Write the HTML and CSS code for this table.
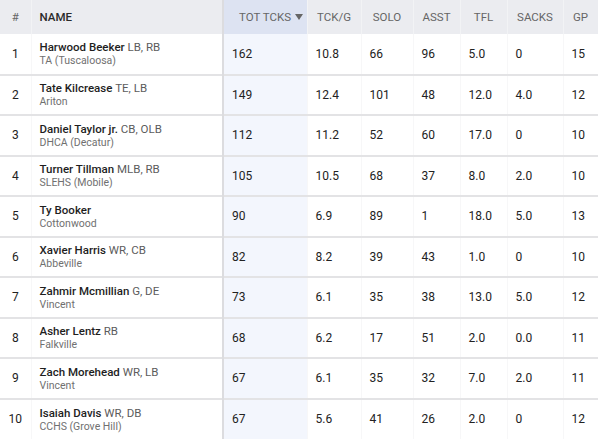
FILE: index.html
```html
<!DOCTYPE html>
<html lang="en">
<head>
    <meta charset="UTF-8">
    <meta name="viewport" content="width=device-width, initial-scale=1.0">
    <title>Tackle Leaders</title>
    <link rel="stylesheet" href="styles.css">
</head>
<body>
    <table class="stats-table">
        <colgroup>
            <col class="col-rank">
            <col class="col-name">
            <col class="col-tot">
            <col class="col-tckg">
            <col class="col-solo">
            <col class="col-asst">
            <col class="col-tfl">
            <col class="col-sacks">
            <col class="col-gp">
        </colgroup>
        <thead>
            <tr>
                <th class="rank">#</th>
                <th class="name-head">NAME</th>
                <th class="sorted">TOT TCKS
                    <svg class="sort-arrow" width="8" height="6" viewBox="0 0 8 6"><path d="M0 0h8L4 6z" fill="#666"/></svg>
                </th>
                <th>TCK/G</th>
                <th>SOLO</th>
                <th>ASST</th>
                <th>TFL</th>
                <th>SACKS</th>
                <th>GP</th>
            </tr>
        </thead>
        <tbody>
            <tr>
                <td class="rank">1</td>
                <td class="player"><div class="player-name">Harwood Beeker <span class="pos">LB, RB</span></div><div class="school">TA (Tuscaloosa)</div></td>
                <td class="sorted">162</td><td>10.8</td><td>66</td><td>96</td><td>5.0</td><td>0</td><td>15</td>
            </tr>
            <tr>
                <td class="rank">2</td>
                <td class="player"><div class="player-name">Tate Kilcrease <span class="pos">TE, LB</span></div><div class="school">Ariton</div></td>
                <td class="sorted">149</td><td>12.4</td><td>101</td><td>48</td><td>12.0</td><td>4.0</td><td>12</td>
            </tr>
            <tr>
                <td class="rank">3</td>
                <td class="player"><div class="player-name">Daniel Taylor jr. <span class="pos">CB, OLB</span></div><div class="school">DHCA (Decatur)</div></td>
                <td class="sorted">112</td><td>11.2</td><td>52</td><td>60</td><td>17.0</td><td>0</td><td>10</td>
            </tr>
            <tr>
                <td class="rank">4</td>
                <td class="player"><div class="player-name">Turner Tillman <span class="pos">MLB, RB</span></div><div class="school">SLEHS (Mobile)</div></td>
                <td class="sorted">105</td><td>10.5</td><td>68</td><td>37</td><td>8.0</td><td>2.0</td><td>10</td>
            </tr>
            <tr>
                <td class="rank">5</td>
                <td class="player"><div class="player-name">Ty Booker</div><div class="school">Cottonwood</div></td>
                <td class="sorted">90</td><td>6.9</td><td>89</td><td>1</td><td>18.0</td><td>5.0</td><td>13</td>
            </tr>
            <tr>
                <td class="rank">6</td>
                <td class="player"><div class="player-name">Xavier Harris <span class="pos">WR, CB</span></div><div class="school">Abbeville</div></td>
                <td class="sorted">82</td><td>8.2</td><td>39</td><td>43</td><td>1.0</td><td>0</td><td>10</td>
            </tr>
            <tr>
                <td class="rank">7</td>
                <td class="player"><div class="player-name">Zahmir Mcmillian <span class="pos">G, DE</span></div><div class="school">Vincent</div></td>
                <td class="sorted">73</td><td>6.1</td><td>35</td><td>38</td><td>13.0</td><td>5.0</td><td>12</td>
            </tr>
            <tr>
                <td class="rank">8</td>
                <td class="player"><div class="player-name">Asher Lentz <span class="pos">RB</span></div><div class="school">Falkville</div></td>
                <td class="sorted">68</td><td>6.2</td><td>17</td><td>51</td><td>2.0</td><td>0.0</td><td>11</td>
            </tr>
            <tr>
                <td class="rank">9</td>
                <td class="player"><div class="player-name">Zach Morehead <span class="pos">WR, LB</span></div><div class="school">Vincent</div></td>
                <td class="sorted">67</td><td>6.1</td><td>35</td><td>32</td><td>7.0</td><td>2.0</td><td>11</td>
            </tr>
            <tr>
                <td class="rank">10</td>
                <td class="player"><div class="player-name">Isaiah Davis <span class="pos">WR, DB</span></div><div class="school">CCHS (Grove Hill)</div></td>
                <td class="sorted">67</td><td>5.6</td><td>41</td><td>26</td><td>2.0</td><td>0</td><td>12</td>
            </tr>
        </tbody>
    </table>
</body>
</html>
```

FILE: styles.css
```css
:root {
    --text-color: #222;
    --muted-color: #5c5c5c;
    --header-bg: #ebecf0;
    --sorted-head-bg: #dde3f2;
    --sorted-bg: #f3f6fd;
    --row-line: #e3e3e5;
}

* {
    margin: 0;
    padding: 0;
    box-sizing: border-box;
}

body {
    background-color: white;
    font-family: 'Roboto', 'Liberation Sans', sans-serif;
    color: var(--text-color);
}

.stats-table {
    width: 598px;
    border-collapse: collapse;
    table-layout: fixed;
    font-size: 12px;
}

.col-rank { width: 31px; }
.col-name { width: 192px; }
.col-tot { width: 84px; }
.col-tckg { width: 54px; }
.col-solo { width: 52px; }
.col-asst { width: 47px; }
.col-tfl { width: 47px; }
.col-sacks { width: 56px; }
.col-gp { width: 35px; }

.stats-table th {
    height: 34px;
    background-color: var(--header-bg);
    color: #666;
    font-size: 11.5px;
    font-weight: 400;
    text-align: center;
    white-space: nowrap;
    border-right: 1px solid #f2f3f5;
}

.stats-table th.name-head {
    text-align: left;
    padding-left: 8px;
    color: #2a2a2a;
    font-weight: 500;
}

.stats-table th.sorted {
    background-color: var(--sorted-head-bg);
    text-align: left;
    padding-left: 15px;
}

.sort-arrow {
    margin-left: 1px;
    vertical-align: 1px;
}

.stats-table td {
    height: 40.5px;
    padding-left: 8px;
    border-top: 2px solid var(--row-line);
    border-right: 1px solid #f7f7f8;
    vertical-align: middle;
}

.stats-table tbody tr:first-child td {
    border-top: none;
}

.stats-table td.rank,
.stats-table th.rank {
    text-align: center;
    padding-left: 0;
}

.stats-table td.player,
.stats-table th.name-head {
    border-right: 2px solid #dcdcdf;
}

.stats-table td.sorted {
    background-color: var(--sorted-bg);
}

.player-name {
    font-size: 11.5px;
    font-weight: 500;
    line-height: 14px;
    color: #1e1e1e;
}

.pos {
    font-weight: 400;
    color: var(--muted-color);
}

.school {
    font-size: 10.5px;
    line-height: 13px;
    color: #707070;
}
```
